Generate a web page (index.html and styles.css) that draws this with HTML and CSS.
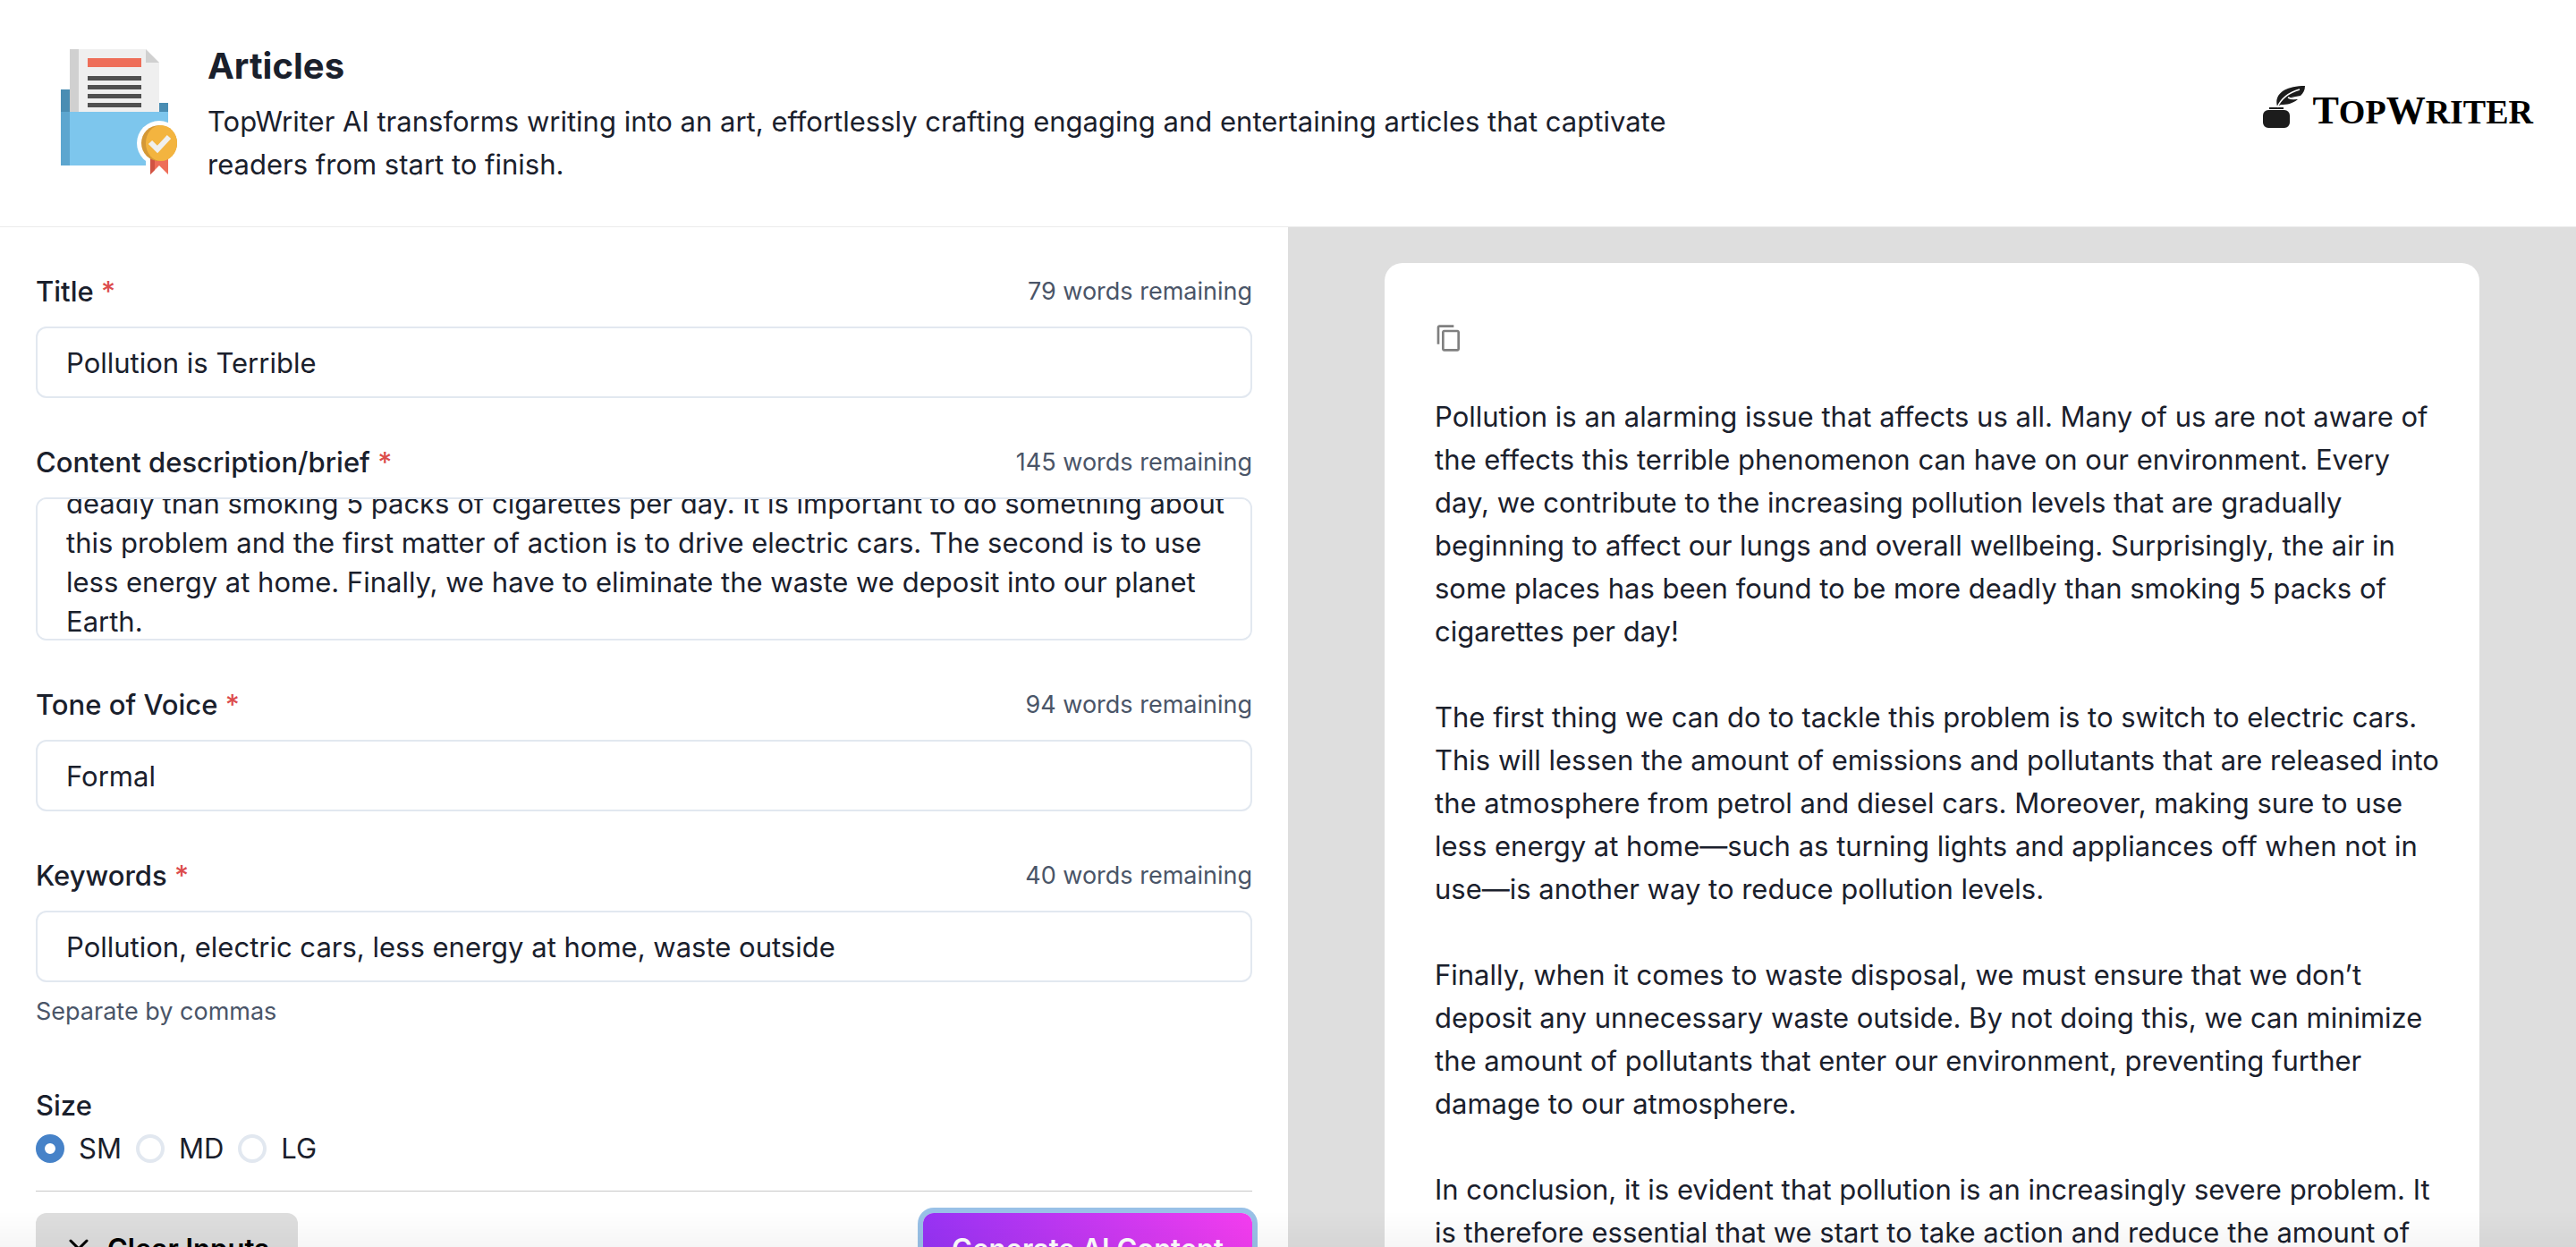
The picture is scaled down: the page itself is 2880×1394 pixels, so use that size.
FILE: index.html
```html
<!DOCTYPE html>
<html lang="en">
<head>
<meta charset="utf-8">
<meta name="viewport" content="width=device-width, initial-scale=1">
<title>Articles – TopWriter</title>
<link rel="stylesheet" href="styles.css">
</head>
<body>
<header class="topbar">
  <svg class="tool-icon" viewBox="60 50 144 150" aria-hidden="true">
    <path fill="#4a8db3" d="M68 100h22v36H68zM170 115h18v24h-18z"/>
    <path fill="#efefef" d="M78 55h85l15 15v58H78z"/>
    <path fill="#d0d0d0" d="M78 55h10v72H78zM163 55l15 15h-15z"/>
    <path fill="#ee6e59" d="M98 65h60v10H98z"/>
    <path fill="#505050" d="M98 85h60v5H98zM98 95h60v5H98zM98 105h60v5H98zM98 115h60v5H98z"/>
    <path fill="#7dc6ed" d="M68 125h120v60H68z"/>
    <path fill="#5da6cf" d="M68 125h10v60H68z"/>
    <circle cx="178" cy="160" r="25" fill="#fff"/>
    <path fill="#fff" d="M163 180h30v20h-30z"/>
    <path fill="#ee6e59" d="M168 174h20v21l-10-10-10 10z"/>
    <path fill="#d05343" d="M168 174h5v16l-5 5z"/>
    <circle cx="178" cy="160" r="20" fill="#d49836"/>
    <path fill="#f3b43f" d="M180 140a18 20 0 0 1 0 40a17 20 0 0 1 0-40z"/>
    <path fill="none" stroke="#f0f0ee" stroke-width="6" d="M168 159l8 8 13-14"/>
  </svg>
  <div class="intro">
    <h1>Articles</h1>
    <p>TopWriter AI transforms writing into an art, effortlessly crafting engaging and entertaining articles that captivate readers from start to finish.</p>
  </div>
  <a class="brand" href="#" aria-label="TopWriter">
    <svg class="brand-mark" viewBox="0 0 47 47" aria-hidden="true">
      <path fill="#1c1c1c" d="M6 27h18a6 6 0 0 1 6 6v8a6 6 0 0 1-6 6H6a6 6 0 0 1-6-6v-8a6 6 0 0 1 6-6zM7 24h16v2H7zM16 23C12 9 25 0 47 0c0 5-2 8-5 11l-11 2 8 2c-6 5-12 6-19 6z"/>
      <path fill="none" stroke="#fff" stroke-width="1.5" d="M16 24C20 15 27 8 41 4M28 13c4 2 8 2 13 0"/>
    </svg>
    <span class="brand-name">T<span class="brand-small">OP</span>W<span class="brand-small">RITER</span></span>
  </a>
</header>

<main class="workspace">
  <form class="inputs">
    <div class="field">
      <div class="field-head">
        <label for="title">Title <span class="required">*</span></label>
        <span class="count">79 words remaining</span>
      </div>
      <input class="control" id="title" type="text" value="Pollution is Terrible">
    </div>
    <div class="field">
      <div class="field-head">
        <label for="brief">Content description/brief <span class="required">*</span></label>
        <span class="count">145 words remaining</span>
      </div>
      <textarea class="control" id="brief">Pollution is an issue that affects us all. The air in some places has been found to be more
deadly than smoking 5 packs of cigarettes per day. It is important to do something about this problem and the first matter of action is to drive electric cars. The second is to use less energy at home. Finally, we have to eliminate the waste we deposit into our planet Earth.</textarea>
    </div>
    <div class="field">
      <div class="field-head">
        <label for="tone">Tone of Voice <span class="required">*</span></label>
        <span class="count">94 words remaining</span>
      </div>
      <input class="control" id="tone" type="text" value="Formal">
    </div>
    <div class="field">
      <div class="field-head">
        <label for="keywords">Keywords <span class="required">*</span></label>
        <span class="count">40 words remaining</span>
      </div>
      <input class="control" id="keywords" type="text" value="Pollution, electric cars, less energy at home, waste outside">
      <p class="hint">Separate by commas</p>
    </div>
    <fieldset class="sizes">
      <legend>Size</legend>
      <div class="options">
        <label><input type="radio" name="size" checked>SM</label>
        <label><input type="radio" name="size">MD</label>
        <label><input type="radio" name="size">LG</label>
      </div>
    </fieldset>
    <div class="actions">
      <button class="btn btn-clear" type="reset">
        <svg viewBox="0 0 32 32" aria-hidden="true"><path d="M7 7l18 18M25 7L7 25"/></svg>
        Clear Inputs
      </button>
      <button class="btn btn-generate" type="button">Generate AI Content</button>
    </div>
  </form>

  <section class="output">
    <article class="sheet">
      <button class="copy" type="button" aria-label="Copy">
        <svg viewBox="0 0 24 24" aria-hidden="true"><path d="M16 1H4c-1.1 0-2 .9-2 2v14h2V3h12V1zm3 4H8c-1.1 0-2 .9-2 2v14c0 1.1.9 2 2 2h11c1.1 0 2-.9 2-2V7c0-1.1-.9-2-2-2zm0 16H8V7h11v14z"/></svg>
      </button>
      <p>Pollution is an alarming issue that affects us all. Many of us are not aware of the effects this terrible phenomenon can have on our environment. Every day, we contribute to the increasing pollution levels that are gradually beginning to affect our lungs and overall wellbeing. Surprisingly, the air in some places has been found to be more deadly than smoking 5 packs of cigarettes per day!</p>
      <p>The first thing we can do to tackle this problem is to switch to electric cars. This will lessen the amount of emissions and pollutants that are released into the atmosphere from petrol and diesel cars. Moreover, making sure to use less energy at home—such as turning lights and appliances off when not in use—is another way to reduce pollution levels.</p>
      <p>Finally, when it comes to waste disposal, we must ensure that we don’t deposit any unnecessary waste outside. By not doing this, we can minimize the amount of pollutants that enter our environment, preventing further damage to our atmosphere.</p>
      <p>In conclusion, it is evident that pollution is an increasingly severe problem. It is therefore essential that we start to take action and reduce the amount of</p>
    </article>
  </section>
</main>
<script src="script.js"></script>
</body>
</html>
```
FILE: styles.css
```css
*, *::before, *::after { box-sizing: border-box; }

body {
  margin: 0;
  height: 100vh;
  overflow: hidden;
  display: flex;
  flex-direction: column;
  background: #fff;
  color: #1a202c;
  font: 400 31px/48px Inter, "Liberation Sans", sans-serif;
}

/* soft shade along the lower edge of the window */
body::after {
  content: "";
  position: fixed;
  inset: auto 0 0;
  height: 40px;
  background: linear-gradient(rgba(0, 0, 0, 0), rgba(0, 0, 0, .035));
  pointer-events: none;
}

h1, p { margin: 0; }
button, input, textarea { font: inherit; color: inherit; }

.topbar {
  flex: none;
  display: flex;
  align-items: flex-start;
  padding: 50px 48px 45px 60px;
  border-bottom: 1px solid #ebebeb;
}
.tool-icon { flex: none; width: 144px; height: 150px; margin-right: 28px; }
.intro { flex: 0 1 1640px; }
.intro h1 { font-size: 40px; font-weight: 700; line-height: 48px; margin-bottom: 14px; }

.brand {
  display: flex;
  align-items: center;
  align-self: center;
  gap: 8px;
  margin: 0 0 20px auto;
  color: #000;
  text-decoration: none;
}
.brand-mark { width: 47px; height: 47px; }
.brand-name { padding-top: 10px; font: 700 44px/48px "Liberation Serif", serif; }
.brand-small { font-size: 38px; }

.workspace {
  flex: 1;
  min-height: 0;
  display: grid;
  grid-template-columns: 1fr 1fr;
}

.inputs {
  display: flex;
  flex-direction: column;
  gap: 48px;
  padding: 48px 40px;
  overflow: hidden;
}
.field-head {
  display: flex;
  justify-content: space-between;
  margin-bottom: 15px;
}
.field-head label, .sizes legend { font-weight: 500; }
.required { color: #dc4c4c; }
.count, .hint { font-size: 27px; color: #4a5568; }
.hint { line-height: 42px; margin-top: 12px; }

.control {
  display: block;
  width: 100%;
  height: 80px;
  padding: 0 32px;
  border: 2px solid #e2e8f0;
  border-radius: 12px;
  background: #fff;
  outline: none;
}
textarea.control {
  height: 160px;
  padding: 16px 16px 16px 32px;
  line-height: 44px;
  resize: none;
  scrollbar-width: none;
}

.sizes { margin: 12px 0 0; padding: 0; border: 0; }
.sizes legend { padding: 0; }
.options { display: flex; gap: 16px; }
.options label { display: flex; align-items: center; gap: 16px; }
.options input {
  appearance: none;
  width: 32px;
  height: 32px;
  margin: 0;
  border: 4px solid #e2e8f0;
  border-radius: 50%;
  background: #fff;
}
.options input:checked { border: 10px solid #4682c8; }

.actions {
  display: flex;
  justify-content: space-between;
  margin-top: -25px;
  padding-top: 24px;
  border-top: 1px solid #c8c8c8;
}
.btn {
  display: flex;
  align-items: center;
  gap: 16px;
  height: 80px;
  padding: 0 32px;
  border: 0;
  border-radius: 12px;
  font-weight: 600;
}
.btn svg { width: 32px; height: 32px; fill: none; stroke: #000; stroke-width: 3; stroke-linecap: round; }
.btn-clear { background: #dedede; color: #000; }
.btn-generate {
  background: linear-gradient(75deg, #9333f5, #f53df0);
  color: #fff;
  box-shadow: 0 0 0 6px #99c1e7;
}

.output {
  background: #dedede;
  padding-top: 40px;
  overflow: hidden;
}
.sheet {
  display: flex;
  flex-direction: column;
  gap: 48px;
  width: 85%;
  min-height: 100%;
  margin: 0 auto;
  padding: 68px 36px 68px 56px;
  border-radius: 20px;
  background: #fff;
}
.copy {
  align-self: flex-start;
  display: flex;
  padding: 0;
  border: 0;
  background: none;
}
.copy svg { width: 32px; height: 32px; fill: #808080; }
```
FILE: script.js
```js
const brief = document.getElementById('brief');
brief.scrollTop = brief.scrollHeight - brief.clientHeight - 19;
```
